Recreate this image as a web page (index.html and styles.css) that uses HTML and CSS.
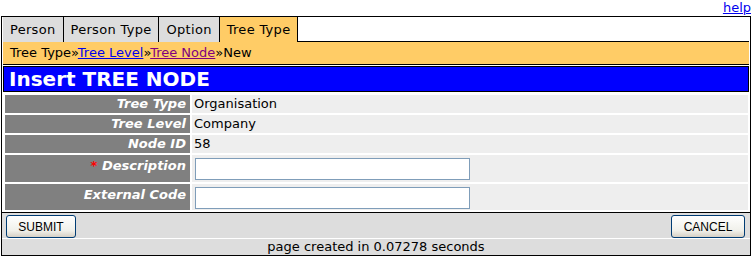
FILE: index.html
```html
<!DOCTYPE html>
<html lang="en">
<head>
    <meta charset="UTF-8">
    <title>Insert TREE NODE</title>
    <link rel="stylesheet" href="styles.css">
</head>
<body>
    <div class="help-bar"><a href="#">help</a></div>

    <div class="frame">
        <!-- Module tabs -->
        <div class="tabs">
            <span class="tab">Person</span>
            <span class="tab">Person Type</span>
            <span class="tab">Option</span>
            <span class="tab active">Tree Type</span>
            <span class="tab-fill"></span>
        </div>

        <!-- Breadcrumb -->
        <div class="crumbs">Tree Type&raquo;<a href="#">Tree Level</a>&raquo;<a href="#" class="visited">Tree Node</a>&raquo;New</div>

        <h1 class="title">Insert TREE NODE</h1>

        <form class="fields">
            <div class="lbl">Tree Type</div>
            <div class="val">Organisation</div>

            <div class="lbl">Tree Level</div>
            <div class="val">Company</div>

            <div class="lbl">Node ID</div>
            <div class="val">58</div>

            <div class="lbl tall"><span class="req">*</span> Description</div>
            <div class="val tall"><input type="text" class="field"></div>

            <div class="lbl tall">External Code</div>
            <div class="val tall"><input type="text" class="field"></div>
        </form>

        <div class="actions">
            <button type="button" class="btn submit">SUBMIT</button>
            <button type="button" class="btn cancel">CANCEL</button>
        </div>

        <div class="footer">page created in 0.07278 seconds</div>
    </div>
</body>
</html>
```

FILE: styles.css
```css
/* Page basics */
body {
    margin: 0;
    font-family: "DejaVu Sans", Verdana, sans-serif;
    font-size: 13px;
    color: #000;
    background: #fff;
}

a {
    color: #0000ee;
}

a.visited {
    color: #800080;
}

/* Help link above the frame */
.help-bar {
    height: 16px;
    line-height: 15px;
    text-align: right;
    padding-right: 1px;
}

/* Outer frame */
.frame {
    margin-left: 1px;
    width: 750px;
    box-sizing: border-box;
    border: 1px solid #000;
    padding: 0 1px;
}

/* Tabs */
.tabs {
    display: flex;
    height: 25px;
}

.tab {
    background: #dddddd;
    border-right: 1px solid #000;
    padding: 0 7px;
    line-height: 25px;
    letter-spacing: 0.3px;
}

.tab.active {
    background: #ffcc66;
}

.tab-fill {
    flex: 1;
    border-bottom: 1px solid #000;
}

/* Breadcrumb */
.crumbs {
    background: #ffcc66;
    height: 22px;
    line-height: 22px;
    padding-left: 7px;
    border-bottom: 1px solid #000;
    margin-bottom: 1px;
}

/* Blue heading */
.title {
    margin: 0 0 1px 0;
    background: #0000ff;
    border: 1px solid #000;
    color: #fff;
    font-size: 20px;
    font-weight: bold;
    height: 24px;
    line-height: 24px;
    padding-left: 5px;
}

/* Field rows */
.fields {
    display: grid;
    grid-template-columns: 185px 1fr;
    grid-template-rows: 18px 18px 18px 27px 26px;
    gap: 2px;
    padding: 2px 1px 2px 2px;
    margin: 0;
}

.lbl {
    background: #808080;
    color: #fff;
    font-weight: bold;
    font-style: italic;
    text-align: right;
    padding-right: 4px;
    line-height: 18px;
}

.val {
    background: #eeeeee;
    padding-left: 2px;
    line-height: 18px;
}

.lbl.tall {
    line-height: 22px;
}

.req {
    color: #ff0000;
}

.field {
    box-sizing: border-box;
    width: 275px;
    height: 22px;
    margin: 3px 0 0 1px;
    border: 1px solid #7f9db9;
    background: #fff;
    padding: 2px;
    font-family: inherit;
    font-size: 12px;
    display: block;
}

/* Button bar */
.actions {
    display: flex;
    justify-content: space-between;
    align-items: flex-start;
    background: #dddddd;
    border-top: 1px solid #000;
    border-bottom: 1px solid #fff;
    height: 27px;
    padding: 2px 5px 0 4px;
    box-sizing: border-box;
    margin: 0 -1px;
}

.btn {
    font-family: "Liberation Sans", Arial, sans-serif;
    font-size: 12px;
    height: 23px;
    border: 1px solid #003c74;
    border-radius: 3px;
    background: linear-gradient(#ffffff, #f0f0ea 70%, #d6d0c5);
    color: #000;
    padding: 0;
    cursor: pointer;
}

.submit {
    width: 70px;
}

.cancel {
    width: 74px;
}

/* Footer line */
.footer {
    background: #dddddd;
    height: 16px;
    line-height: 16px;
    text-align: center;
    font-size: 13px;
    margin: 0 -1px;
}
```
